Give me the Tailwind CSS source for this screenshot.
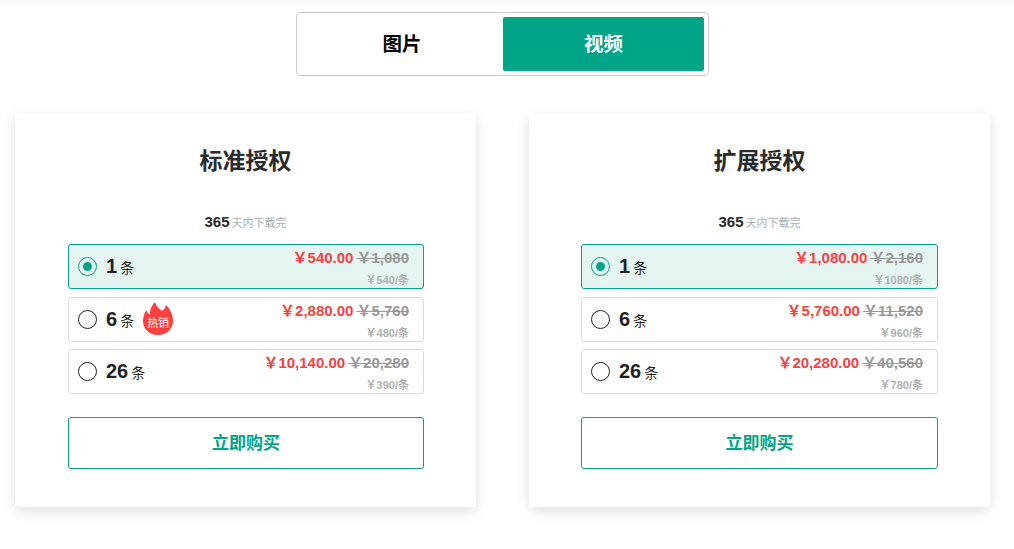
<!DOCTYPE html>
<html lang="zh-CN">
<head>
<meta charset="UTF-8"/>
<title>授权</title>
<script src="https://cdn.jsdelivr.net/npm/@tailwindcss/browser@4"></script>
</head>
<body class="bg-white w-[1014px] h-[549px] overflow-hidden font-['Liberation_Sans','Noto_Sans_CJK_SC',sans-serif]">

<!-- top edge -->
<div class="h-[6px] bg-gradient-to-b from-[#f7f7f7] to-white"></div>

<!-- tabs -->
<div class="w-[413px] h-[64px] mt-[6px] ml-[296px] p-1 flex border border-[#ccc] rounded-[4px]">
  <div class="w-[202px] pt-px flex items-center justify-center text-[19.5px] font-bold text-black">图片</div>
  <div class="w-[201px] pt-px flex items-center justify-center text-[19.5px] font-bold text-white bg-[#00a587] rounded-[2px]">视频</div>
</div>

<div class="flex gap-[53px] ml-[15px] mt-[37px]">

  <!-- standard -->
  <div class="w-[461px] h-[394px] pt-[32px] px-[53px] bg-white rounded-[3px] shadow-[0_4px_14px_rgba(0,0,0,0.13)]">
    <h2 class="h-[32px] leading-[32px] text-center text-[23px] font-bold text-[#2b2b2b]">标准授权</h2>
    <div class="mt-[36px] h-[18px] leading-[18px] text-center text-[#2b2b2b]"><span class="text-[15px] font-bold">365</span><span class="ml-[2px] text-[11px] text-[#a6b1b1]">天内下载完</span></div>
    <div class="mt-[13px] w-[356px] flex flex-col gap-[8px]">
      <div class="h-[45px] pl-[9px] pr-[14px] flex items-center justify-between border border-[#00a587] bg-[#e5f6f2] rounded-[3px]">
        <div class="flex items-center">
          <span class="w-[19px] h-[19px] flex items-center justify-center border border-[#00a587] rounded-full"><span class="w-[9px] h-[9px] rounded-full bg-[#00a587]"></span></span>
          <span class="ml-[9px] -mt-[2px] text-[20px] font-bold text-[#222]">1</span><span class="ml-[3px] mt-[3px] text-[14px] text-[#222]">条</span>
        </div>
        <div class="h-full flex flex-col items-end justify-between pt-[4px] pb-[1px]">
          <div class="leading-[18px] text-[15px] font-bold"><span class="text-[#fb4040]">￥540.00</span><span class="ml-[3px] text-[#999] line-through">￥1,080</span></div>
          <div class="leading-[14px] text-[11px] font-bold text-[#b0b0b0]">￥540/条</div>
        </div>
      </div>
      <div class="h-[45px] pl-[9px] pr-[14px] flex items-center justify-between border border-[#ddd] rounded-[3px]">
        <div class="flex items-center">
          <span class="w-[19px] h-[19px] border border-[#222] rounded-full"></span>
          <span class="ml-[9px] -mt-[2px] text-[20px] font-bold text-[#222]">6</span><span class="ml-[3px] mt-[3px] text-[14px] text-[#222]">条</span>
          <span class="relative ml-[9px] -mt-[2px] w-[30px] h-[33px] flex items-end justify-center">
            <svg class="absolute inset-0" width="30" height="33" viewBox="0 0 30 33"><path fill="#fb4040" d="M12 0c1 4 3.500 6.500 7 9 2-1.500 3.500-3.500 4-6 4 4 7 9.500 7 16 0 8-6.500 14-15 14S0 27 0 19c0-4.500 1.500-8 3.500-11 .5 2 1.500 3.500 3 4.500C7 7 9 3 12 0z"/></svg>
            <span class="relative mb-[5px] leading-[14px] text-[11px] text-white">热销</span>
          </span>
        </div>
        <div class="h-full flex flex-col items-end justify-between pt-[4px] pb-[1px]">
          <div class="leading-[18px] text-[15px] font-bold"><span class="text-[#fb4040]">￥2,880.00</span><span class="ml-[3px] text-[#999] line-through">￥5,760</span></div>
          <div class="leading-[14px] text-[11px] font-bold text-[#b0b0b0]">￥480/条</div>
        </div>
      </div>
      <div class="h-[45px] -mt-px pl-[9px] pr-[14px] flex items-center justify-between border border-[#ddd] rounded-[3px]">
        <div class="flex items-center">
          <span class="w-[19px] h-[19px] border border-[#222] rounded-full"></span>
          <span class="ml-[9px] -mt-[2px] text-[20px] font-bold text-[#222]">26</span><span class="ml-[3px] mt-[3px] text-[14px] text-[#222]">条</span>
        </div>
        <div class="h-full flex flex-col items-end justify-between pt-[4px] pb-[1px]">
          <div class="leading-[18px] text-[15px] font-bold"><span class="text-[#fb4040]">￥10,140.00</span><span class="ml-[3px] text-[#999] line-through">￥20,280</span></div>
          <div class="leading-[14px] text-[11px] font-bold text-[#b0b0b0]">￥390/条</div>
        </div>
      </div>
    </div>
    <div class="mt-[23px] w-[356px] h-[52px] pt-px flex items-center justify-center border border-[#00a587] rounded-[3px] text-[17px] font-bold text-[#00a587]">立即购买</div>
  </div>

  <!-- extended -->
  <div class="w-[461px] h-[394px] pt-[32px] pl-[52px] pr-[52px] bg-white rounded-[3px] shadow-[0_4px_14px_rgba(0,0,0,0.13)]">
    <h2 class="h-[32px] leading-[32px] text-center text-[23px] font-bold text-[#2b2b2b]">扩展授权</h2>
    <div class="mt-[36px] h-[18px] leading-[18px] text-center text-[#2b2b2b]"><span class="text-[15px] font-bold">365</span><span class="ml-[2px] text-[11px] text-[#a6b1b1]">天内下载完</span></div>
    <div class="mt-[13px] w-[357px] flex flex-col gap-[8px]">
      <div class="h-[45px] pl-[9px] pr-[14px] flex items-center justify-between border border-[#00a587] bg-[#e5f6f2] rounded-[3px]">
        <div class="flex items-center">
          <span class="w-[19px] h-[19px] flex items-center justify-center border border-[#00a587] rounded-full"><span class="w-[9px] h-[9px] rounded-full bg-[#00a587]"></span></span>
          <span class="ml-[9px] -mt-[2px] text-[20px] font-bold text-[#222]">1</span><span class="ml-[3px] mt-[3px] text-[14px] text-[#222]">条</span>
        </div>
        <div class="h-full flex flex-col items-end justify-between pt-[4px] pb-[1px]">
          <div class="leading-[18px] text-[15px] font-bold"><span class="text-[#fb4040]">￥1,080.00</span><span class="ml-[3px] text-[#999] line-through">￥2,160</span></div>
          <div class="leading-[14px] text-[11px] font-bold text-[#b0b0b0]">￥1080/条</div>
        </div>
      </div>
      <div class="h-[45px] pl-[9px] pr-[14px] flex items-center justify-between border border-[#ddd] rounded-[3px]">
        <div class="flex items-center">
          <span class="w-[19px] h-[19px] border border-[#222] rounded-full"></span>
          <span class="ml-[9px] -mt-[2px] text-[20px] font-bold text-[#222]">6</span><span class="ml-[3px] mt-[3px] text-[14px] text-[#222]">条</span>
        </div>
        <div class="h-full flex flex-col items-end justify-between pt-[4px] pb-[1px]">
          <div class="leading-[18px] text-[15px] font-bold"><span class="text-[#fb4040]">￥5,760.00</span><span class="ml-[3px] text-[#999] line-through">￥11,520</span></div>
          <div class="leading-[14px] text-[11px] font-bold text-[#b0b0b0]">￥960/条</div>
        </div>
      </div>
      <div class="h-[45px] -mt-px pl-[9px] pr-[14px] flex items-center justify-between border border-[#ddd] rounded-[3px]">
        <div class="flex items-center">
          <span class="w-[19px] h-[19px] border border-[#222] rounded-full"></span>
          <span class="ml-[9px] -mt-[2px] text-[20px] font-bold text-[#222]">26</span><span class="ml-[3px] mt-[3px] text-[14px] text-[#222]">条</span>
        </div>
        <div class="h-full flex flex-col items-end justify-between pt-[4px] pb-[1px]">
          <div class="leading-[18px] text-[15px] font-bold"><span class="text-[#fb4040]">￥20,280.00</span><span class="ml-[3px] text-[#999] line-through">￥40,560</span></div>
          <div class="leading-[14px] text-[11px] font-bold text-[#b0b0b0]">￥780/条</div>
        </div>
      </div>
    </div>
    <div class="mt-[23px] w-[357px] h-[52px] pt-px flex items-center justify-center border border-[#00a587] rounded-[3px] text-[17px] font-bold text-[#00a587]">立即购买</div>
  </div>

</div>
</body>
</html>
